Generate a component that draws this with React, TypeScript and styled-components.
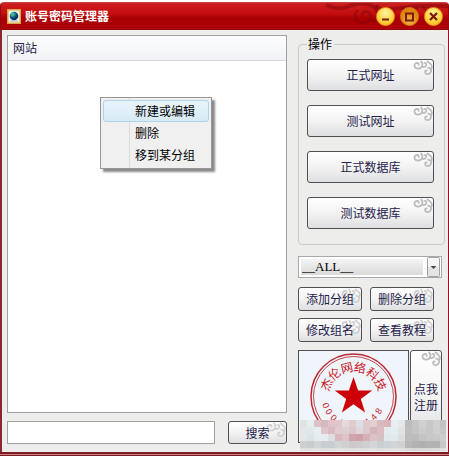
import React from "react";
import styled, { createGlobalStyle, css } from "styled-components";

const GlobalStyle = createGlobalStyle`
  * { box-sizing: border-box; }
  body { margin: 0; background: #fff; }
  body, button, input, select {
    font-family: "Noto Sans CJK SC", "Liberation Sans", sans-serif;
    font-size: 12px;
    line-height: 16px;
  }
`;

const Window = styled.main`
  min-height: 100vh;
  padding-top: 2px;
  display: flex;
  flex-direction: column;
`;

const TitleBar = styled.header`
  position: relative;
  height: 28px;
  flex: none;
  display: flex;
  align-items: center;
  gap: 4px;
  padding: 0 5px 0 6px;
  color: #fff;
  border-radius: 4px 4px 0 0;
  border: 1px solid #8e0c10;
  border-top-color: #c44343;
  background: linear-gradient(#ce2020, #c50d0f 40%, #a80003 60%, #b00508);
`;

const TitleText = styled.h1`
  margin: 0;
  flex: 1;
  font-size: 12px;
  line-height: 16px;
  font-weight: 700;
`;

const TitleClouds = styled.svg`
  position: absolute;
  top: 0;
  right: 0;
`;

const WindowControls = styled.div`
  position: relative;
  display: flex;
  gap: 5px;
`;

const RoundButton = styled.button<{ $deep?: boolean }>`
  width: 19px;
  height: 19px;
  padding: 0;
  border-radius: 50%;
  border: 1px solid ${(p) => (p.$deep ? "#d9820c" : "#f09a12")};
  background: ${(p) =>
    p.$deep
      ? "radial-gradient(circle at 50% 75%, #f5b545, #e08a14 55%, #d97c0a)"
      : "radial-gradient(circle at 50% 30%, #fff3a0, #ffd13a 60%, #f8a90e)"};
  svg { display: block; margin: 0 auto; }
`;

const Body = styled.div`
  flex: 1;
  display: grid;
  grid-template-columns: minmax(0, 1fr) 147px;
  column-gap: 11px;
  padding: 5px 3px 8px 5px;
  background: #ededec;
  border-left: 2px solid #8c2630;
  border-right: 1px solid #980f28;
`;

const BottomEdge = styled.footer`
  flex: none;
  height: 4px;
  border: solid #7c1c24;
  border-width: 2px 0 1px;
  background: #d07f80;
`;

const MainColumn = styled.section`
  display: flex;
  flex-direction: column;
  gap: 8px;
`;

const ListPane = styled.div`
  position: relative;
  flex: 1;
  min-height: 200px;
  background: #fff;
  border: 1px solid #a0a0a0;
`;

const SiteTable = styled.table`
  width: 100%;
  border-collapse: collapse;
  th {
    height: 24px;
    padding: 0 5px;
    text-align: left;
    font-weight: 400;
    color: #25214a;
    background: linear-gradient(#fdfdfe, #f1f2f5);
    border-bottom: 1px solid #d8d8dc;
  }
`;

const ContextMenu = styled.div`
  position: absolute;
  left: 92px;
  top: 61px;
  width: 112px;
  padding: 2px;
  display: flex;
  flex-direction: column;
  border: 1px solid #979797;
  background: linear-gradient(90deg, #f0f0f0 28px, #dcdcdc 28px 29px, #f0f0f0 29px);
  box-shadow: 3px 3px 2px #8a8a8a;
`;

const MenuItem = styled.button<{ $active?: boolean }>`
  height: 22px;
  padding: 0 0 0 31px;
  text-align: left;
  color: #000;
  border: 1px solid transparent;
  border-radius: 3px;
  background: none;
  ${(p) =>
    p.$active &&
    css`
      border-color: #afd3e8;
      background: linear-gradient(#eaf4fa, #d6eaf5);
    `}
`;

const SearchRow = styled.form`
  display: flex;
  gap: 13px;
`;

const SearchInput = styled.input`
  flex: 1;
  min-width: 0;
  height: 23px;
  padding: 0 4px;
  border: 1px solid #a0a0a0;
  background: #fff;
`;

const PushButton = styled.button<{ $height: number; $width?: number }>`
  position: relative;
  width: ${(p) => (p.$width ? `${p.$width}px` : "100%")};
  height: ${(p) => p.$height}px;
  padding: 0;
  overflow: hidden;
  color: #25214a;
  border: 1px solid #505054;
  border-radius: 3px;
  background: linear-gradient(#fff, #f3f3f4 50%, #dedfe0);
`;

const Corner = styled.svg`
  position: absolute;
  top: 0;
  right: 0;
`;

const Label = styled.span`
  position: relative;
`;

const SideColumn = styled.aside`
  display: flex;
  flex-direction: column;
  padding-top: 2px;
`;

const Group = styled.fieldset`
  margin: 0;
  min-width: 0;
  padding: 8px 10px 15px 8px;
  border: 1px solid #cbcbc4;
  border-radius: 4px;
  legend {
    height: 14px;
    line-height: 14px;
    padding: 0 2px 0 1px;
    color: #000;
  }
`;

const Stack = styled.div`
  display: grid;
  gap: 14px;
`;

const SelectBox = styled.div`
  position: relative;
  margin: 11px 3px 0 0;
`;

const GroupSelect = styled.select`
  appearance: none;
  display: block;
  width: 100%;
  height: 22px;
  padding: 0 0 0 3px;
  font-family: "Liberation Serif", serif;
  font-size: 13px;
  color: #000;
  border: 1px solid #a9a9a9;
  border-radius: 0;
  outline: 0;
  background: linear-gradient(#f4f4f4, #dadada) 2px 2px / calc(100% - 20px) 16px no-repeat #fff;
`;

const SelectArrow = styled.svg`
  position: absolute;
  top: 1px;
  right: 1px;
  pointer-events: none;
`;

const SmallGrid = styled.div`
  display: grid;
  grid-template-columns: 64px 64px;
  gap: 7px 8px;
  margin-top: 9px;
`;

const SealRow = styled.div`
  position: relative;
  display: flex;
  gap: 1px;
  margin-top: 8px;
`;

const SealFrame = styled.div`
  width: 111px;
  height: 93px;
  overflow: hidden;
  border: 1px solid #505054;
  background: #eff5fa;
  svg { display: block; }
`;

const Mosaic = styled.svg`
  position: absolute;
  left: 2px;
  top: 70px;
  pointer-events: none;
`;

const CloudCorner = ({ faint }: { faint?: boolean }) => (
  <Corner width="20" height="17" viewBox="0 0 20 17" fill="none" stroke={faint ? "#d0d0d2" : "#bdbdbf"} strokeWidth="1.8" aria-hidden="true">
    <path d="M5 5.2C6.2 5 6 3.2 4.6 3C2.4 2.8 1 4.6 1.6 6.4C2.6 9.3 7.2 9.3 8.8 6.5C9.8 4.6 9.2 2.4 7.6 1" />
    <path d="M8.8 6.4C11 7.8 13.6 6.4 13.4 4.2C13.2 2.6 11.6 2.4 11.2 3.6" />
    <path d="M14.4 10.8C13.2 10 11.6 11 12.2 12.6C13.2 15 17.2 14.6 18 11.6C18.6 9 16.6 7.4 14.4 7.6M18 9.6C19.6 7 18.8 4.2 16.4 3L14 1" />
  </Corner>
);

interface ActionProps {
  text: string;
  height: number;
  width?: number;
}

const Action = ({ text, height, width }: ActionProps) => (
  <PushButton type="button" $height={height} $width={width}>
    <CloudCorner faint={height < 30} />
    <Label>{text}</Label>
  </PushButton>
);

const AppIcon = () => (
  <svg width="14" height="15" viewBox="0 0 14 15" aria-hidden="true">
    <defs>
      <radialGradient id="globe" cx="35%" cy="30%">
        <stop offset="0" stopColor="#a8e4d8" />
        <stop offset=".45" stopColor="#218c9c" />
        <stop offset="1" stopColor="#07396c" />
      </radialGradient>
    </defs>
    <rect x=".75" y=".75" width="12.5" height="13.5" fill="#f4f6ee" stroke="#dca63f" strokeWidth="1.5" />
    <path d="M3 12H11" stroke="#b3bdc4" strokeWidth="1.2" />
    <circle cx="7" cy="7" r="4.3" fill="url(#globe)" />
    <path d="M4.5 6Q6 3.5 8 4.7Q7 7 5 7.3Z" fill="#43b480" />
  </svg>
);

const sealNameMarks: [string, number][] = [
  ["杰", -66], ["伦", -40], ["网", -13], ["络", 13], ["科", 40], ["技", 66],
];
const sealDigits: [string, number][] = [
  ["0", 72], ["0", 58], ["0", 43], ["4", 28], ["2", 13], ["1", -30], ["4", -45], ["8", -60],
];

const Seal = () => (
  <svg width="109" height="91" viewBox="0 0 109 91" fill="#c8161d" role="img" aria-label="杰伦网络科技">
    <g transform="translate(54.5 45.5)">
      <circle r="42.5" fill="none" stroke="#bf2932" strokeWidth="1.5" />
      <circle r="40" fill="none" stroke="#c5464d" strokeWidth="1" />
      <polygon
        fill="#cc0005"
        points="0,-19.5 4.6,-6 18.7,-6 7.3,2.4 11.6,16 0,7.8 -11.6,16 -7.3,2.4 -18.7,-6 -4.6,-6"
      />
      {sealNameMarks.map(([mark, angle]) => (
        <text key={mark} transform={`rotate(${angle})`} y="-25" textAnchor="middle" fontSize="12" fontFamily="'Noto Sans CJK SC', sans-serif">
          {mark}
        </text>
      ))}
      {sealDigits.map(([digit, angle]) => (
        <text key={angle} transform={`rotate(${angle})`} y="32" textAnchor="middle" fontSize="9" fontFamily="'Liberation Sans', sans-serif">
          {digit}
        </text>
      ))}
    </g>
  </svg>
);

const mosaicRows = [
  "e0e3e3 e6edef dcc2c6 d6b9be e1c3c8 dec6ca e5d9dc e2cbcf dcdfe3 e0c8cc e2cdd1 d6bcc0 d9b5ba e8eef3 e6e8ea bcbcbc c6c6c6 d0d0d0 c8c8c8 d1d1d1 c2c2c2",
  "e4e6e6 e0e8eb e6eef2 dfc4c9 d8bbc1 dfcbd0 dccfd3 dcc8cc e1d6da dcc9ce d5b4ba dcbdc2 e7e9ed e4edf1 e2e3e4 bebebe c5c5c5 cccccc c7c7c7 d0d0d0 c6c6c6",
  "e5e6e6 dde4e7 e5edf0 e5ebee e1dde1 d8b8bf dcc4c9 cfa4aa cda1a8 d4b1b7 dbc2c7 d7bfc4 e0e8ed e4e9ec dddede bdbdbd bcbcbc c4c4c4 c8c8c8 c9c9c9 cdcdcd",
  "cfcfcf c7cccd d0d5d7 c9cfd0 c8cecf d1d4d5 d0d0d2 cfc8cb cfcacd d0cfd1 d2d6d8 cad0d2 cdd3d6 d2d5d6 d1d1d1 b8b8b8 b3b3b3 b0b0b0 b3b3b3 b2b2b2 c8c8c8",
  "e1e1e1 dfe0e0 e2e2e2 dfdfdf e0e0e0 e2e2e2 e1e1e1 dfdfdf e1e1e1 e0e0e0 e2e2e2 dfdfdf e1e1e1 e2e2e2 e0e0e0 dadada d7d7d7 d8d8d8 dadada dbdbdb e0e0e0",
].map((row) => row.split(" "));

const Censor = () => (
  <Mosaic width="146" height="31" viewBox="0 0 146 31" shapeRendering="crispEdges" aria-hidden="true">
    {mosaicRows.map((row, y) =>
      row.map((color, x) => (
        <rect key={`${x}-${y}`} x={x * 7} y={y * 7} width="7" height="7" fill={`#${color}`} />
      ))
    )}
  </Mosaic>
);

const App = () => (
  <>
    <GlobalStyle />
    <Window>
      <TitleBar>
        <TitleClouds width="124" height="27" viewBox="0 0 124 27" fill="none" stroke="#82060a" strokeOpacity=".5" strokeWidth="2.5" aria-hidden="true">
          <path d="M2 2Q14 8 26 3T48 3T76 5T124 3" strokeWidth="4" />
          <path d="M39 14C36 11 40 7 44 9C49 12 46 20 39 20C31 20 29 11 34 7" />
          <path d="M47 17Q56 20 62 15T72 9M77 5Q86 9 94 5M98 3Q103 11 110 5" />
          <path d="M54 2Q49 6 54 10T62 17" />
        </TitleClouds>
        <AppIcon />
        <TitleText>账号密码管理器</TitleText>
        <WindowControls>
          <RoundButton type="button" aria-label="最小化">
            <svg width="17" height="17"><path d="M5 11.5H12" stroke="#7c1c08" strokeWidth="2" /></svg>
          </RoundButton>
          <RoundButton type="button" aria-label="最大化" $deep>
            <svg width="17" height="17"><path d="M4 5.5H13M5 6V12.5H12V6" stroke="#7c1c08" strokeWidth="2" fill="none" /></svg>
          </RoundButton>
          <RoundButton type="button" aria-label="关闭">
            <svg width="17" height="17"><path d="M5 5L12 12M12 5L5 12" stroke="#7c1c08" strokeWidth="2.3" /></svg>
          </RoundButton>
        </WindowControls>
      </TitleBar>

      <Body>
        <MainColumn>
          <ListPane>
            <SiteTable>
              <thead>
                <tr><th scope="col">网站</th></tr>
              </thead>
            </SiteTable>
            <ContextMenu role="menu">
              <MenuItem type="button" role="menuitem" $active>新建或编辑</MenuItem>
              <MenuItem type="button" role="menuitem">删除</MenuItem>
              <MenuItem type="button" role="menuitem">移到某分组</MenuItem>
            </ContextMenu>
          </ListPane>
          <SearchRow onSubmit={(e) => e.preventDefault()}>
            <SearchInput type="text" aria-label="搜索" />
            <Action text="搜索" height={23} width={59} />
          </SearchRow>
        </MainColumn>

        <SideColumn>
          <Group>
            <legend>操作</legend>
            <Stack>
              <Action text="正式网址" height={32} />
              <Action text="测试网址" height={32} />
              <Action text="正式数据库" height={32} />
              <Action text="测试数据库" height={32} />
            </Stack>
          </Group>
          <SelectBox>
            <GroupSelect aria-label="分组" defaultValue="all">
              <option value="all">__ALL__</option>
            </GroupSelect>
            <SelectArrow width="14" height="20" viewBox="0 0 14 20" aria-hidden="true">
              <rect x=".5" y=".5" width="12" height="19" rx="1" fill="#e4e4e4" stroke="#a2a2a2" />
              <rect x="1" y="1" width="11" height="9" fill="#f5f5f5" />
              <path d="M3.5 9H9.5L6.5 12Z" fill="#4b4b4b" />
            </SelectArrow>
          </SelectBox>
          <SmallGrid>
            <Action text="添加分组" height={24} />
            <Action text="删除分组" height={24} />
            <Action text="修改组名" height={24} />
            <Action text="查看教程" height={24} />
          </SmallGrid>
          <SealRow>
            <SealFrame><Seal /></SealFrame>
            <PushButton type="button" $height={93} $width={32}>
              <CloudCorner />
              <Label>点我<br />注册</Label>
            </PushButton>
            <Censor />
          </SealRow>
        </SideColumn>
      </Body>
      <BottomEdge />
    </Window>
  </>
);

export default App;
